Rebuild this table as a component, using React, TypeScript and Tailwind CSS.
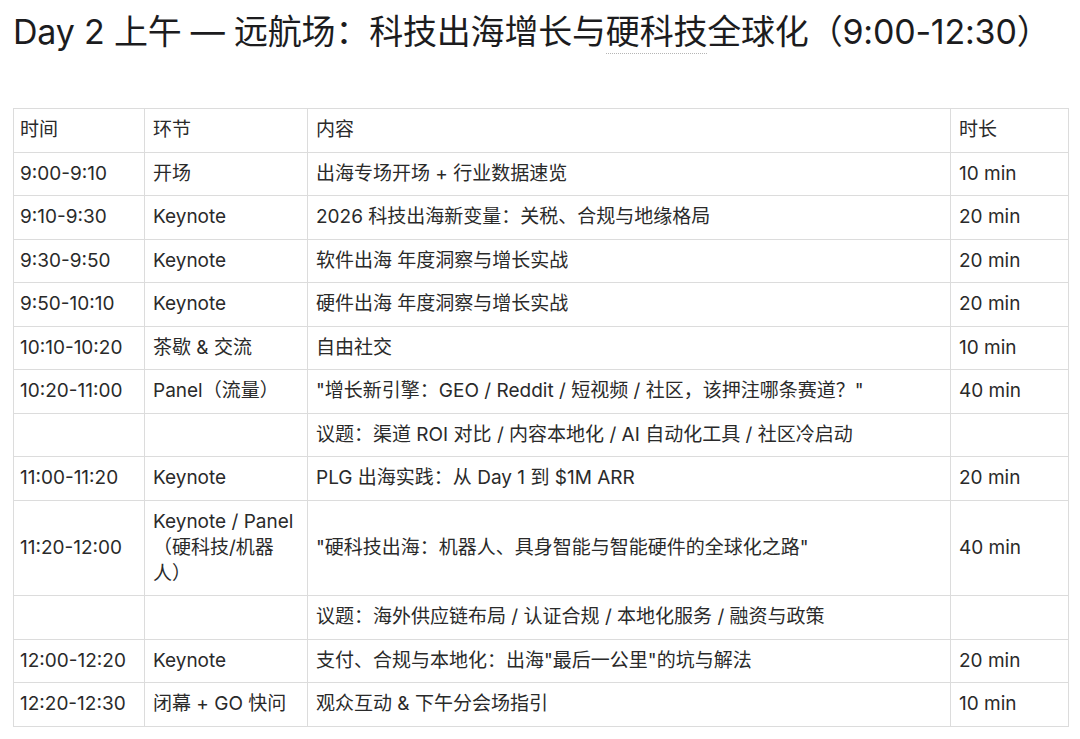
import React from "react";

type Row = { t: string; s: React.ReactNode; c: string; d: string };

const rows: Row[] = [
  { t: "9:00-9:10", s: "开场", c: "出海专场开场 + 行业数据速览", d: "10 min" },
  { t: "9:10-9:30", s: "Keynote", c: "2026 科技出海新变量：关税、合规与地缘格局", d: "20 min" },
  { t: "9:30-9:50", s: "Keynote", c: "软件出海 年度洞察与增长实战", d: "20 min" },
  { t: "9:50-10:10", s: "Keynote", c: "硬件出海 年度洞察与增长实战", d: "20 min" },
  { t: "10:10-10:20", s: "茶歇 & 交流", c: "自由社交", d: "10 min" },
  { t: "10:20-11:00", s: "Panel（流量）", c: "\"增长新引擎：GEO / Reddit / 短视频 / 社区，该押注哪条赛道？\"", d: "40 min" },
  { t: "", s: "", c: "议题：渠道 ROI 对比 / 内容本地化 / AI 自动化工具 / 社区冷启动", d: "" },
  { t: "11:00-11:20", s: "Keynote", c: "PLG 出海实践：从 Day 1 到 $1M ARR", d: "20 min" },
  {
    t: "11:20-12:00",
    s: (
      <>
        Keynote / Panel
        <br />
        （硬科技/机器
        <br />
        人）
      </>
    ),
    c: "\"硬科技出海：机器人、具身智能与智能硬件的全球化之路\"",
    d: "40 min",
  },
  { t: "", s: "", c: "议题：海外供应链布局 / 认证合规 / 本地化服务 / 融资与政策", d: "" },
  { t: "12:00-12:20", s: "Keynote", c: "支付、合规与本地化：出海\"最后一公里\"的坑与解法", d: "20 min" },
  { t: "12:20-12:30", s: "闭幕 + GO 快问", c: "观众互动 & 下午分会场指引", d: "10 min" },
];

const cell =
  "border border-[#dcdcdc] py-[8.25px] leading-[26px] align-middle text-left font-normal whitespace-nowrap";

export default function App() {
  return (
    <div
      className="bg-white min-h-[739px] pl-[13px] text-[#2a2a2a] [text-spacing-trim:space-all]"
      style={{ fontFamily: 'Inter, "Noto Sans CJK SC", sans-serif' }}
    >
      <h1 className="text-[34px] leading-[44px] pt-[10px] font-normal text-[#1c1c1e] tracking-[-0.2px] whitespace-nowrap">
        Day 2 上午 — 远航场：科技出海增长与
        <span className="border-b-[1.5px] border-dotted border-[#b5b5b5] pb-[1px]">硬科技</span>
        全球化（9:00-12:30）
      </h1>
      <table className="mt-[54px] border-collapse table-fixed w-[1055px] text-[19px]">
        <colgroup>
          <col className="w-[131px]" />
          <col className="w-[163px]" />
          <col className="w-[643px]" />
          <col className="w-[118px]" />
        </colgroup>
        <thead>
          <tr>
            <th className={cell + " px-[6px]"}>时间</th>
            <th className={cell + " px-[8px]"}>环节</th>
            <th className={cell + " px-[8px]"}>内容</th>
            <th className={cell + " px-[8px]"}>时长</th>
          </tr>
        </thead>
        <tbody>
          {rows.map((r, i) => (
            <tr key={i}>
              <td className={cell + " px-[6px]"}>{r.t}</td>
              <td className={cell + " px-[8px]"}>{r.s}</td>
              <td className={cell + " px-[8px]"}>{r.c}</td>
              <td className={cell + " px-[8px]"}>{r.d}</td>
            </tr>
          ))}
        </tbody>
      </table>
    </div>
  );
}
